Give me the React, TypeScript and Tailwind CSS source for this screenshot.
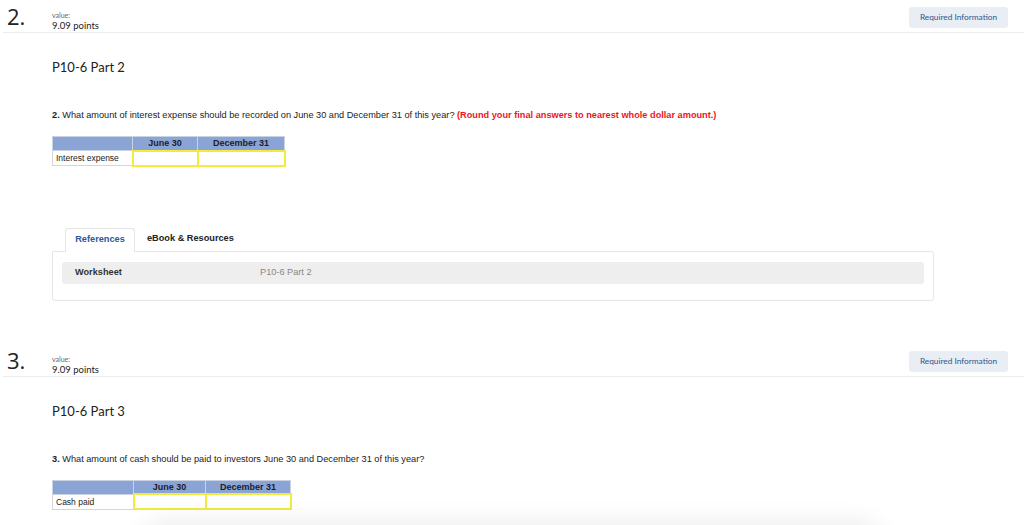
import React from 'react';

// widths are passed as full class names so tailwind picks them up
const AnswerTable = ({ label, widths }: { label: string; widths: [string, string, string] }) => (
  <table className="border-collapse border border-[#d6d6d6] font-['Liberation_Sans',Arial,sans-serif] text-[#222]">
    <thead>
      <tr className="bg-[#8aa5d5]">
        <th className={`${widths[0]} h-[14px] border border-[#c9d3e4] p-0`}></th>
        <th className={`${widths[1]} h-[14px] border border-[#c9d3e4] p-0 text-[9px] font-bold leading-[12px] text-[#1c1c2a]`}>June 30</th>
        <th className={`${widths[2]} h-[14px] border border-[#c9d3e4] p-0 text-[9px] font-bold leading-[12px] text-[#1c1c2a]`}>December 31</th>
      </tr>
    </thead>
    <tbody>
      <tr>
        <td className="h-[15px] border border-[#d6d6d6] bg-white p-0 pl-[3px] text-left text-[8.5px] leading-[12px]">{label}</td>
        <td className="h-[15px] border-2 border-[#f2ea3c] bg-white p-0"></td>
        <td className="h-[15px] border-2 border-[#f2ea3c] bg-white p-0"></td>
      </tr>
    </tbody>
  </table>
);

const SectionHeader = ({ num }: { num: string }) => (
  <div className="ml-[3px] flex h-[33px] items-start border-b border-[#ececec]">
    <div className="w-[49px] pl-[4px] pt-[2px] font-['Open_Sans',sans-serif] text-[22px] font-normal leading-[28px] text-[#222]">
      {num}
    </div>
    <div className="flex flex-col pt-[11px] font-['Lato',sans-serif]">
      <span className="text-[7px] leading-[9px] text-[#666]">value:</span>
      <span className="text-[9.5px] leading-[12px] text-[#222]">9.09 points</span>
    </div>
    <div className="ml-auto mr-[16px] mt-[7px] flex h-[21px] w-[99px] items-center justify-center rounded-[3px] bg-[#e9eef4] font-['Lato',sans-serif] text-[8.3px] text-[#2d5591]">
      Required Information
    </div>
  </div>
);

const Question = ({ num, text, note }: { num: string; text: string; note?: string }) => (
  <p className="font-['Liberation_Sans',Arial,sans-serif] text-[9.2px] leading-[12px] text-[#222]">
    <b>{num}.</b> {text}
    {note && <b className="text-[#f0141e]"> {note}</b>}
  </p>
);

export default function App() {
  return (
    <div className="min-h-[525px] w-[1024px] overflow-hidden bg-white">
      {/* part 2 */}
      <SectionHeader num="2." />
      <div className="pl-[52px]">
        <h2 className="mt-[27px] font-['Lato',sans-serif] text-[13px] leading-[14px] text-[#222]">P10-6 Part 2</h2>
        <div className="mt-[35px]">
          <Question
            num="2"
            text="What amount of interest expense should be recorded on June 30 and December 31 of this year?"
            note="(Round your final answers to nearest whole dollar amount.)"
          />
        </div>
        <div className="mt-[15px]">
          <AnswerTable label="Interest expense" widths={['w-[80px]', 'w-[65px]', 'w-[87px]']} />
        </div>

        <div className="mt-[60px] w-[882px]">
          <div className="flex items-end pl-[13px]">
            <div className="relative top-[1px] flex h-[24px] w-[70px] items-center justify-center rounded-t-[3px] border border-b-0 border-[#e6e6e6] bg-white font-['Liberation_Sans',Arial,sans-serif] text-[9.2px] font-bold text-[#2d5a9a]">
              References
            </div>
            <div className="flex h-[24px] items-center pl-[12px] font-['Liberation_Sans',Arial,sans-serif] text-[9.2px] font-bold text-[#222]">
              eBook &amp; Resources
            </div>
          </div>
          <div className="rounded-b-[3px] rounded-tr-[3px] border border-[#e6e6e6] px-[9px] pb-[16px] pt-[10px]">
            <div className="flex h-[22px] items-center rounded-[3px] bg-[#eeeeee] font-['Liberation_Sans',Arial,sans-serif] text-[9.2px]">
              <span className="w-[198px] pl-[13px] font-bold text-[#333]">Worksheet</span>
              <span className="text-[#888]">P10-6 Part 2</span>
            </div>
          </div>
        </div>
      </div>

      {/* part 3 */}
      <div className="mt-[43px]">
        <SectionHeader num="3." />
        <div className="pl-[52px]">
          <h2 className="mt-[27px] font-['Lato',sans-serif] text-[13px] leading-[14px] text-[#222]">P10-6 Part 3</h2>
          <div className="mt-[35px]">
            <Question num="3" text="What amount of cash should be paid to investors June 30 and December 31 of this year?" />
          </div>
          <div className="mt-[15px]">
            <AnswerTable label="Cash paid" widths={['w-[81px]', 'w-[72px]', 'w-[85px]']} />
          </div>
        </div>
        <div className="mx-auto mt-[18px] h-[40px] w-[760px] rounded-t-[40px] bg-white shadow-[0_-8px_24px_rgba(0,0,0,0.07)]"></div>
      </div>
    </div>
  );
}
